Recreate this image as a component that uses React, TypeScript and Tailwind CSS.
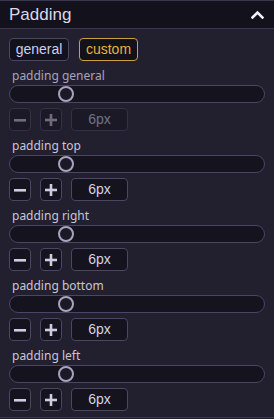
import { useState } from "react";

type Group = { label: string; disabled?: boolean };

const GROUPS: Group[] = [
  { label: "padding general", disabled: true },
  { label: "padding top" },
  { label: "padding right" },
  { label: "padding bottom" },
  { label: "padding left" },
];

function Slider() {
  return (
    <div className="relative h-[18px] w-full rounded-full border border-[#4b4566] bg-[#15131d]">
      <div className="absolute left-[48px] top-[0px] h-[16px] w-[16px] rounded-full border-2 border-[#a9a4bd] bg-[#1b1926]" />
    </div>
  );
}

function PaddingGroup({ label, disabled }: Group) {
  return (
    <div className="flex flex-col pt-[6px]">
      <div
        className={`h-[17px] px-[3px] text-[12px] leading-[17px] text-[#c9c5d6] ${disabled ? "opacity-80" : ""}`}
      >
        {label}
      </div>
      <div className="mt-[1px]">
        <Slider />
      </div>
      <div className={`mt-[5px] flex items-center gap-[9px] ${disabled ? "opacity-45" : ""}`}>
        <button className="flex h-[23px] w-[22px] items-center justify-center rounded-[4px] border border-[#4b4566] bg-[#15131d]">
          <svg width="12" height="12" viewBox="0 0 12 12">
            <rect x="0" y="5" width="12" height="2.6" fill="#cfcbe0" />
          </svg>
        </button>
        <button className="flex h-[23px] w-[22px] items-center justify-center rounded-[4px] border border-[#4b4566] bg-[#15131d]">
          <svg width="12" height="12" viewBox="0 0 12 12">
            <rect x="0" y="4.7" width="12" height="2.6" fill="#cfcbe0" />
            <rect x="4.7" y="0" width="2.6" height="12" fill="#cfcbe0" />
          </svg>
        </button>
        <div className="flex h-[23px] w-[57px] items-center justify-center rounded-[4px] border border-[#4b4566] bg-[#15131d] font-['Liberation_Sans',sans-serif] text-[14px] text-[#d6d2e4]">
          6px
        </div>
      </div>
    </div>
  );
}

export default function App() {
  const [mode, setMode] = useState<"general" | "custom">("custom");

  return (
    <div className="h-[419px] w-[274px] bg-[#221f2e] font-['Noto_Sans',sans-serif]">
      <div className="flex h-[29px] items-center justify-between border-y border-[#3b3650] bg-[#13111b] pl-[9px] pr-[9px]">
        <span className="font-['Liberation_Sans',sans-serif] text-[17px] text-[#d9d8ee]">Padding</span>
        <svg width="13" height="9" viewBox="0 0 13 9" className="mr-[1px]">
          <polyline
            points="1.5,7.5 6.5,2.5 11.5,7.5"
            fill="none"
            stroke="#f2f1fa"
            strokeWidth="2.6"
            strokeLinecap="square"
          />
        </svg>
      </div>
      <div className="flex flex-col border-b border-[#3b3650] px-[9px] pb-[6px] pt-[9px]">
        <div className="flex gap-[10px] font-['Liberation_Sans',sans-serif] text-[14px]">
          <button
            onClick={() => setMode("general")}
            className={`h-[23px] w-[60px] rounded-[4px] border bg-[#13111b] ${mode === "general" ? "border-[#c9a33a] text-[#e2b63c]" : "border-[#4b4566] text-[#c9d0f2]"}`}
          >
            general
          </button>
          <button
            onClick={() => setMode("custom")}
            className={`h-[23px] w-[59px] rounded-[4px] border bg-[#13111b] ${mode === "custom" ? "border-[#c9a33a] text-[#e2b63c]" : "border-[#4b4566] text-[#c9d0f2]"}`}
          >
            custom
          </button>
        </div>
        {GROUPS.map((g) => (
          <PaddingGroup key={g.label} {...g} />
        ))}
      </div>
    </div>
  );
}
